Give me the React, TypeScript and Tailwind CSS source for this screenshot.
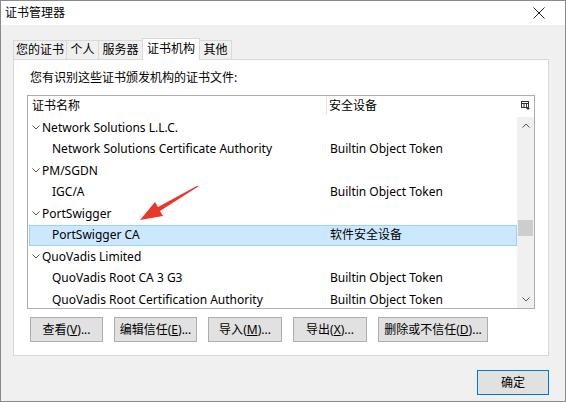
import React from "react";

const font = { fontFamily: '"Noto Sans", "Noto Sans CJK SC", sans-serif' };

interface Row {
  name: string;
  device?: string;
  group?: boolean;
  selected?: boolean;
}

const rows: Row[] = [
  { name: "Network Solutions L.L.C.", group: true },
  { name: "Network Solutions Certificate Authority", device: "Builtin Object Token" },
  { name: "PM/SGDN", group: true },
  { name: "IGC/A", device: "Builtin Object Token" },
  { name: "PortSwigger", group: true },
  { name: "PortSwigger CA", device: "软件安全设备", selected: true },
  { name: "QuoVadis Limited", group: true },
  { name: "QuoVadis Root CA 3 G3", device: "Builtin Object Token" },
  { name: "QuoVadis Root Certification Authority", device: "Builtin Object Token" },
];

const tabs = [
  { label: "您的证书", w: "w-[54px]" },
  { label: "个人", w: "w-[33px]" },
  { label: "服务器", w: "w-[45px]" },
  { label: "证书机构", w: "w-[58px]", active: true },
  { label: "其他", w: "w-[33px]" },
];

function Chevron({ up = false }: { up?: boolean }) {
  return (
    <svg width="8" height="5" viewBox="0 0 8 5" className="shrink-0">
      <path
        d={up ? "M0.5 4.5 L4 1 L7.5 4.5" : "M0.5 0.5 L4 4 L7.5 0.5"}
        fill="none"
        stroke="#555"
        strokeWidth="1"
      />
    </svg>
  );
}

function Btn({ pre, key1, w }: { pre: string; key1: string; w: string }) {
  return (
    <button
      className={`${w} h-[25px] bg-[#e1e1e1] border border-[#adadad] text-[12px] text-black flex items-center justify-center`}
    >
      {pre}(<u>{key1}</u>)...
    </button>
  );
}

export default function App() {
  return (
    <div
      style={font}
      className="relative w-[566px] h-[402px] border border-[#8a8a8a] bg-[#f0f0f0] flex flex-col text-black overflow-hidden"
    >
      {/* title bar */}
      <div className="h-[24px] bg-white flex items-center justify-between pl-[4px] pr-[20px]">
        <span className="text-[12px]">证书管理器</span>
        <svg width="12" height="12" viewBox="0 0 12 12">
          <path d="M0.5 0.5 L11.5 11.5 M11.5 0.5 L0.5 11.5" stroke="#222" strokeWidth="1" />
        </svg>
      </div>

      {/* tabs */}
      <div className="mt-[13px] h-[21px] flex items-end pl-[13px]">
        {tabs.map((t) =>
          t.active ? (
            <div
              key={t.label}
              className={`${t.w} -ml-px h-[22px] -mb-px relative z-10 bg-white border border-b-0 border-[#d9d9d9] flex items-start justify-center pt-[1px] text-[12px]`}
            >
              {t.label}
            </div>
          ) : (
            <div
              key={t.label}
              className={`${t.w} -ml-px h-[19px] bg-[#f0f0f0] border border-b-0 border-[#d9d9d9] flex items-center justify-center text-[12px]`}
            >
              {t.label}
            </div>
          )
        )}
      </div>

      {/* panel */}
      <div className="ml-[12px] mr-[16px] h-[297px] bg-white border border-[#d9d9d9] flex flex-col">
        <div className="mt-[10px] pl-[16px] h-[16px] leading-[16px] text-[12px]">
          您有识别这些证书颁发机构的证书文件:
        </div>

        {/* list */}
        <div className="mt-[9px] mx-[13px] h-[214px] border border-[#adadad] flex flex-col">
          <div className="h-[21px] pb-[2px] flex items-center text-[12px] shrink-0">
            <div className="w-[299px] pl-[4px] border-r border-[#e5e5e5] h-full flex items-center">
              证书名称
            </div>
            <div className="flex-1 pl-[2px]">安全设备</div>
            <div className="w-[17px] flex items-center justify-center">
              <svg width="9" height="9" viewBox="0 0 9 9">
                <rect x="0.5" y="0.5" width="7" height="6" fill="none" stroke="#333" />
                <path d="M0.5 2.5 H7.5 M3 2.5 V6.5 M5.5 2.5 V6.5" stroke="#333" />
                <path d="M5 7 L9 7 L7 9 Z" fill="#333" />
              </svg>
            </div>
          </div>
          <div className="flex-1 flex overflow-hidden">
            <div className="flex-1 flex flex-col overflow-hidden pl-[1px]">
              {rows.map((r) => (
                <div
                  key={r.name}
                  className={`h-[21.5px] shrink-0 flex items-center text-[12px] border ${
                    r.selected ? "bg-[#cce8ff] border-[#99d1ff]" : "border-transparent"
                  }`}
                >
                  <div className="w-[298px] flex items-center">
                    {r.group ? (
                      <>
                        <span className="ml-[2px] mr-[2px]">
                          <Chevron />
                        </span>
                        <span>{r.name}</span>
                      </>
                    ) : (
                      <span className="pl-[22px]">{r.name}</span>
                    )}
                  </div>
                  <div className="pl-[2px]">{r.device}</div>
                </div>
              ))}
            </div>
            {/* scrollbar */}
            <div className="w-[17px] bg-[#f0f0f0] flex flex-col items-center">
              <div className="h-[17px] flex items-center justify-center">
                <Chevron up />
              </div>
              <div className="flex-1 w-full flex flex-col">
                <div className="h-[86px]" />
                <div className="h-[16px] bg-[#cdcdcd] mx-px" />
              </div>
              <div className="h-[17px] flex items-center justify-center">
                <Chevron />
              </div>
            </div>
          </div>
        </div>

        {/* buttons */}
        <div className="mt-[8px] pl-[16px] flex gap-[11px]">
          <Btn pre="查看" key1="V" w="w-[73px]" />
          <Btn pre="编辑信任" key1="E" w="w-[83px]" />
          <Btn pre="导入" key1="M" w="w-[74px]" />
          <Btn pre="导出" key1="X" w="w-[74px]" />
          <Btn pre="删除或不信任" key1="D" w="w-[110px]" />
        </div>
      </div>

      {/* footer */}
      <div className="mt-[14px] mr-[16px] flex justify-end">
        <button className="w-[72px] h-[25px] bg-[#e1e1e1] border border-[#0078d7] text-[12px] flex items-center justify-center">
          确定
        </button>
      </div>

      {/* red annotation arrow */}
      <svg
        className="absolute left-0 top-0 pointer-events-none"
        width="566"
        height="402"
        viewBox="0 0 566 402"
      >
        <polygon
          points="139,219 154,201 157,206 196.7,184.6 197.3,185.4 159,210 162,215"
          fill="#e8382c"
        />
      </svg>
    </div>
  );
}
